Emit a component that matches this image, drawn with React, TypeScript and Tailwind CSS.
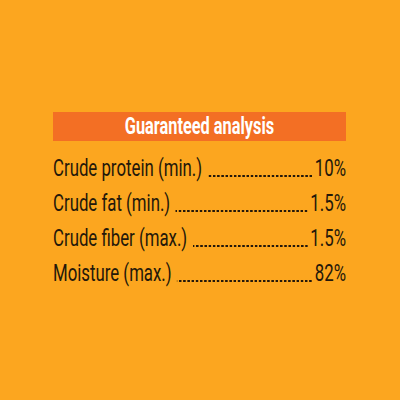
import React from "react";

const rows = [
  { label: "Crude protein (min.)", value: "10%" },
  { label: "Crude fat (min.)", value: "1.5%" },
  { label: "Crude fiber (max.)", value: "1.5%" },
  { label: "Moisture (max.)", value: "82%" },
];

const S = 0.7;
const W = 293;

export default function App() {
  return (
    <div
      className="w-[400px] h-[400px] bg-[#fca61f] flex flex-col items-start pl-[53px] pt-[112px]"
      style={{ fontFamily: "Roboto, 'Liberation Sans', sans-serif" }}
    >
      <div className="w-[293px] h-[29px] bg-[#f36f24] overflow-hidden">
        <div
          className="h-[29px] leading-[29px] text-center text-white font-bold text-[23px] origin-left"
          style={{ width: W / 0.71, transform: `scaleX(0.71)` }}
        >
          Guaranteed analysis
        </div>
      </div>
      <div className="w-[293px] mt-[10px] overflow-hidden">
        {rows.map((r) => (
          <div
            key={r.label}
            className="flex items-start h-[35px] leading-[35px] text-[24px] text-[#24180a] origin-left whitespace-nowrap"
            style={{ width: W / S, transform: `scaleX(${S})` }}
          >
            <span className="shrink-0">{r.label}</span>
            <div className="flex-1 ml-[8px] mr-[4px] mt-[24px] h-[2px] bg-[linear-gradient(to_left,#24180a_50%,transparent_50%)] bg-[length:6px_2px] bg-repeat-x bg-right" />
            <span className="shrink-0">{r.value}</span>
          </div>
        ))}
      </div>
    </div>
  );
}
